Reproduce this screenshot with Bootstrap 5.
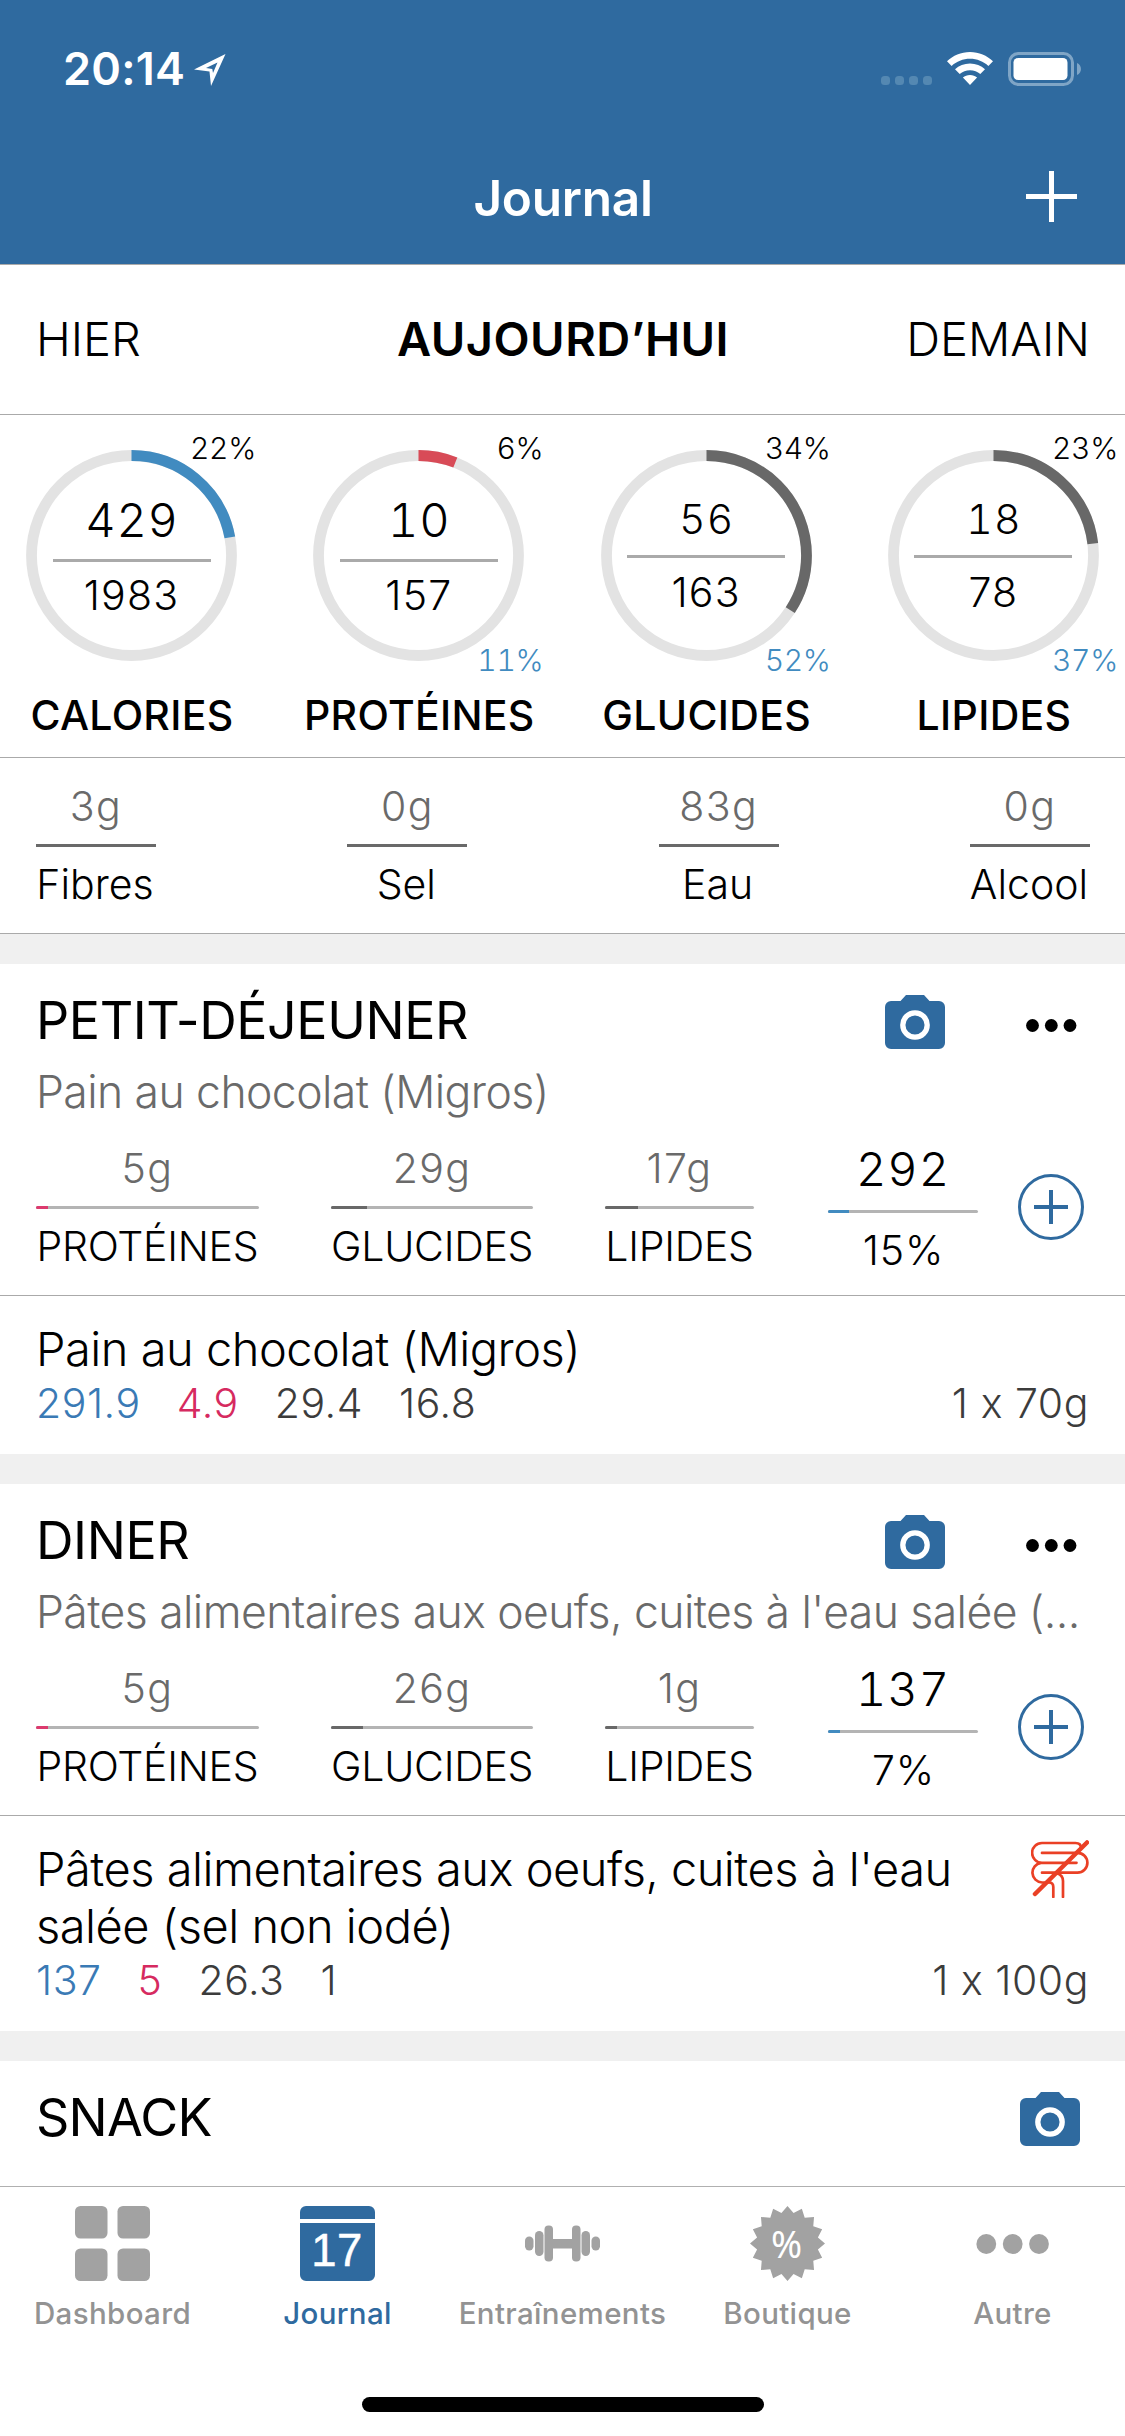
<!DOCTYPE html>
<html lang="fr">
<head>
<meta charset="utf-8">
<meta name="viewport" content="width=device-width, initial-scale=1">
<title>Journal</title>
<link rel="stylesheet" href="https://cdn.jsdelivr.net/npm/bootstrap@5.3.0/dist/css/bootstrap.min.css">
<style>
  :root { --brand: #2f6a9f; --rule: #aaaaaa; }
  body { font-family: Inter, "Liberation Sans", sans-serif; font-weight: 300; color: #000; background: #fff; line-height: 50px; font-size: 41px; }
  svg { display: block; flex: none; }
  .screen { width: 1125px; height: 2436px; overflow: hidden; white-space: nowrap; }
  .tnum { font-feature-settings: "tnum"; }

  .topbar { background: var(--brand); color: #fff; font-weight: 600; }
  .statusbar { height: 132px; padding: 5px 43px 0 63px; }
  .clock { font-size: 45px; letter-spacing: .25px; }
  .navrow { height: 132px; }
  .navrow .title { font-size: 49.5px; letter-spacing: -.25px; padding-left: 1px; }
  .navrow .add { right: 48px; top: 39px; }

  .days { height: 151px; border-top: 1px solid var(--rule); border-bottom: 1px solid var(--rule); padding: 0 35px 2px 36px; font-size: 47px; }
  .days .today { font-weight: 600; letter-spacing: .45px; padding-left: 1px; }

  .rings { height: 343px; border-bottom: 1px solid var(--rule); padding: 35px 26px 0; }
  .ring-col { width: 211px; }
  .ring { width: 211px; height: 211px; padding-top: 45px; }
  .ring.raised { padding-top: 44px; }
  .ring svg { left: 0; top: 0; }
  .ring .eaten { letter-spacing: 1.2px; margin-right: -1px; }
  .ring .eaten.big { font-size: 47px; letter-spacing: .8px; }
  .ring .bar { width: 158px; height: 3px; margin-top: 14px; background: #aaa; }
  .ring.raised .bar { margin-top: 11px; }
  .ring .goal { letter-spacing: 1.2px; margin-top: 8px; }
  .ring.raised .goal { margin-top: 9px; }
  .ring .pct { right: -19px; font-size: 30px; line-height: 36px; letter-spacing: -.3px; }
  .ring .pct.hi { top: -20px; }
  .ring .pct.lo { bottom: -17px; color: #418bc0; }
  .ring-name { margin-top: 29px; font-weight: 500; letter-spacing: .3px; padding-left: 1px; }

  .micros { height: 176px; border-bottom: 1px solid var(--rule); padding: 23px 35px 0 36px; }
  .micros > div { width: 120px; }
  .grams { color: #6a6a6a; letter-spacing: 1.4px; }
  .micros .line { width: 100%; height: 3px; background: #696969; margin: 13px 0 12px; }
  .micros .name { margin-left: -2px; }

  .band { height: 30px; background: #f0f0f0; }

  .meal-head { padding: 27px 0 0 36px; }
  .meal-title { font-size: 52px; font-weight: 400; line-height: 60px; letter-spacing: -.42px; }
  .cam { margin-top: 4px; }
  .more { margin: 28px 48px 0 81px; }
  .meal-sub { font-size: 44.5px; line-height: 60px; letter-spacing: -.57px; color: #6a6a6a; padding-left: 36px; margin-top: 11px; }
  .stats { height: 174px; padding: 21px 0 0 36px; border-bottom: 1px solid var(--rule); }
  .stats .gauge { height: 3px; background: #b4b4b4; border-radius: 2px; overflow: hidden; margin: 13px 0 12px; width: 100%; }
  .stats .gauge i { display: block; height: 3px; background: #686868; }
  .stats .name { letter-spacing: -.25px; }
  .w-p { width: 223px; margin-right: 72px; }
  .w-g { width: 202px; margin-right: 72px; }
  .w-l { width: 149px; margin-right: 74px; }
  .w-c { width: 150px; margin-right: 40px; padding-top: 1px; }
  .w-c .kcal { font-size: 47px; letter-spacing: .9px; }
  .w-c .gauge { margin: 16px 0 12px; }
  .w-c .share { letter-spacing: .8px; padding-left: 1px; }
  .stats .plus { margin-top: 31px; }

  .food { padding: 24px 36px 26px 36px; }
  .food-name { font-size: 47px; line-height: 57px; letter-spacing: -.49px; }
  .vals { gap: 36px; color: #3c3c3c; letter-spacing: .55px; margin-top: 1px; }
  .vals .kc { color: #3a7ab5; }
  .vals .pr { color: #d62a60; }
  .snack { height: 125px; }

  .tabs { height: 250px; border-top: 1px solid #b0b0b0; padding-top: 19px; color: #939393; font-weight: 500; font-size: 29.5px; line-height: 36px; }
  .tabs .lbl { margin-top: 14px; letter-spacing: .35px; }
  .tabs .on { color: var(--brand); }
  .homebar { width: 402px; height: 15px; border-radius: 8px; background: #000; margin: 66px auto 0; }
</style>
<script src="https://cdn.jsdelivr.net/npm/bootstrap@5.3.0/dist/js/bootstrap.bundle.min.js"></script>
</head>
<body>
<svg width="0" height="0" class="position-absolute" aria-hidden="true">
  <symbol id="cam" viewBox="0 0 60 54"><path fill="#2f6a9f" d="M21 0H39L44.500 6H54a6 6 0 0 1 6 6V48a6 6 0 0 1-6 6H6a6 6 0 0 1-6-6V12a6 6 0 0 1 6-6H15.500Z"/><circle cx="30" cy="30" r="12.200" fill="none" stroke="#fff" stroke-width="5.300"/></symbol>
  <symbol id="dots" viewBox="0 0 51 13"><circle cx="6.500" cy="6.500" r="6.400"/><circle cx="25.300" cy="6.500" r="6.400"/><circle cx="44" cy="6.500" r="6.400"/></symbol>
  <symbol id="plus" viewBox="0 0 66 66"><circle cx="33" cy="33" r="31.500" fill="none" stroke="#2f6a9f" stroke-width="3"/><path d="M16 33H50M33 16V50" stroke="#2f6a9f" stroke-width="4"/></symbol>
</svg>

<div class="screen d-flex flex-column">
  <header class="topbar">
    <div class="statusbar d-flex align-items-center">
      <span class="clock">20:14</span>
      <svg width="32" height="33" viewBox="0 0 32 33" style="margin-left:9px;margin-top:4px"><path fill="#fff" fill-rule="evenodd" d="M31.500 0L17 32L15.500 17.500L0 15.500ZM23.500 8.500L12 14L18.300 15L19 19Z"/></svg>
      <svg class="ms-auto" width="52" height="34" viewBox="0 0 52 34"><g fill="#5488b2"><rect x="0" y="24" width="9" height="9" rx="3.500"/><rect x="14" y="24" width="9" height="9" rx="3.500"/><rect x="28" y="24" width="9" height="9" rx="3.500"/><rect x="42" y="24" width="9" height="9" rx="3.500"/></g></svg>
      <svg width="46" height="34" viewBox="0 0 46 34" style="margin-left:14px"><path fill="#fff" d="M23 0C14 0 6 3.500 0 9.300L4.600 14C9.500 9.400 16 6.800 23 6.800S36.500 9.400 41.400 14L46 9.300C40 3.500 32 0 23 0ZM23 11.500C17.200 11.500 12 13.700 8 17.300L12.700 22C15.500 19.600 19 18.200 23 18.200S30.500 19.600 33.300 22L38 17.300C34 13.700 28.800 11.500 23 11.500ZM23 23C20.200 23 17.800 24 15.900 25.600L23 33L30.100 25.600C28.200 24 25.800 23 23 23Z"/></svg>
      <svg width="74" height="34" viewBox="0 0 74 34" style="margin-left:15px"><rect x="1.500" y="1.500" width="63" height="31" rx="9" fill="none" stroke="#7fa5c6" stroke-width="3"/><rect x="5.500" y="6" width="54" height="22" rx="4.500" fill="#fff"/><path fill="#7fa5c6" d="M69 11C74.300 13 74.300 21 69 23Z"/></svg>
    </div>
    <div class="navrow position-relative d-flex align-items-center justify-content-center">
      <span class="title">Journal</span>
      <svg class="add position-absolute" width="51" height="51" viewBox="0 0 51 51"><path d="M0 25.500H51M25.500 0V51" stroke="#fff" stroke-width="5"/></svg>
    </div>
  </header>

  <nav class="days position-relative d-flex align-items-center justify-content-between">
    <span>HIER</span>
    <span class="today position-absolute start-50 translate-middle-x">AUJOURD’HUI</span>
    <span>DEMAIN</span>
  </nav>

  <section class="rings d-flex justify-content-between">
    <div class="ring-col d-flex flex-column align-items-center">
      <div class="ring position-relative d-flex flex-column align-items-center">
        <svg class="position-absolute" width="211" height="211" viewBox="0 0 211 211" fill="none" stroke-width="10.800"><circle cx="105.500" cy="105.500" r="100" stroke="#e3e3e3"/><circle cx="105.500" cy="105.500" r="100" stroke="#418bc0" pathLength="100" stroke-dasharray="22.100 100" transform="rotate(-90 105.500 105.500)"/></svg>
        <span class="eaten big tnum">429</span><div class="bar"></div><span class="goal">1983</span>
        <span class="pct hi tnum position-absolute">22%</span>
      </div>
      <div class="ring-name">CALORIES</div>
    </div>
    <div class="ring-col d-flex flex-column align-items-center">
      <div class="ring position-relative d-flex flex-column align-items-center">
        <svg class="position-absolute" width="211" height="211" viewBox="0 0 211 211" fill="none" stroke-width="10.800"><circle cx="105.500" cy="105.500" r="100" stroke="#e3e3e3"/><circle cx="105.500" cy="105.500" r="100" stroke="#d84b57" pathLength="100" stroke-dasharray="6 100" transform="rotate(-90 105.500 105.500)"/></svg>
        <span class="eaten big tnum">10</span><div class="bar"></div><span class="goal">157</span>
        <span class="pct hi tnum position-absolute">6%</span><span class="pct lo tnum position-absolute">11%</span>
      </div>
      <div class="ring-name">PROTÉINES</div>
    </div>
    <div class="ring-col d-flex flex-column align-items-center">
      <div class="ring raised position-relative d-flex flex-column align-items-center">
        <svg class="position-absolute" width="211" height="211" viewBox="0 0 211 211" fill="none" stroke-width="10.800"><circle cx="105.500" cy="105.500" r="100" stroke="#e3e3e3"/><circle cx="105.500" cy="105.500" r="100" stroke="#686868" pathLength="100" stroke-dasharray="34.200 100" transform="rotate(-90 105.500 105.500)"/></svg>
        <span class="eaten tnum">56</span><div class="bar"></div><span class="goal">163</span>
        <span class="pct hi tnum position-absolute">34%</span><span class="pct lo tnum position-absolute">52%</span>
      </div>
      <div class="ring-name">GLUCIDES</div>
    </div>
    <div class="ring-col d-flex flex-column align-items-center">
      <div class="ring raised position-relative d-flex flex-column align-items-center">
        <svg class="position-absolute" width="211" height="211" viewBox="0 0 211 211" fill="none" stroke-width="10.800"><circle cx="105.500" cy="105.500" r="100" stroke="#e3e3e3"/><circle cx="105.500" cy="105.500" r="100" stroke="#686868" pathLength="100" stroke-dasharray="23.100 100" transform="rotate(-90 105.500 105.500)"/></svg>
        <span class="eaten tnum">18</span><div class="bar"></div><span class="goal">78</span>
        <span class="pct hi tnum position-absolute">23%</span><span class="pct lo tnum position-absolute">37%</span>
      </div>
      <div class="ring-name">LIPIDES</div>
    </div>
  </section>

  <section class="micros d-flex justify-content-between text-center">
    <div><div class="grams">3g</div><div class="line"></div><div class="name">Fibres</div></div>
    <div><div class="grams">0g</div><div class="line"></div><div class="name">Sel</div></div>
    <div><div class="grams">83g</div><div class="line"></div><div class="name">Eau</div></div>
    <div><div class="grams">0g</div><div class="line"></div><div class="name">Alcool</div></div>
  </section>

  <div class="band"></div>

  <section>
    <div class="meal-head d-flex">
      <div class="meal-title me-auto">PETIT-DÉJEUNER</div>
      <svg class="cam" width="60" height="54"><use href="#cam"/></svg>
      <svg class="more" width="51" height="13"><use href="#dots"/></svg>
    </div>
    <div class="meal-sub">Pain au chocolat (Migros)</div>
    <div class="stats d-flex text-center">
      <div class="w-p"><div class="grams">5g</div><div class="gauge"><i style="width:12px;background:#dc3a6e"></i></div><div class="name">PROTÉINES</div></div>
      <div class="w-g"><div class="grams">29g</div><div class="gauge"><i style="width:18%"></i></div><div class="name">GLUCIDES</div></div>
      <div class="w-l"><div class="grams">17g</div><div class="gauge"><i style="width:22%"></i></div><div class="name">LIPIDES</div></div>
      <div class="w-c"><div class="kcal tnum">292</div><div class="gauge"><i style="width:14%;background:#418bc0"></i></div><div class="share">15%</div></div>
      <svg class="plus" width="66" height="66"><use href="#plus"/></svg>
    </div>
    <div class="food">
      <div class="food-name">Pain au chocolat (Migros)</div>
      <div class="vals d-flex"><span class="kc">291.9</span><span class="pr">4.9</span><span>29.4</span><span>16.8</span><span class="ms-auto">1 x 70g</span></div>
    </div>
  </section>

  <div class="band"></div>

  <section>
    <div class="meal-head d-flex">
      <div class="meal-title me-auto">DINER</div>
      <svg class="cam" width="60" height="54"><use href="#cam"/></svg>
      <svg class="more" width="51" height="13"><use href="#dots"/></svg>
    </div>
    <div class="meal-sub">Pâtes alimentaires aux oeufs, cuites à l'eau salée (...</div>
    <div class="stats d-flex text-center">
      <div class="w-p"><div class="grams">5g</div><div class="gauge"><i style="width:12px;background:#dc3a6e"></i></div><div class="name">PROTÉINES</div></div>
      <div class="w-g"><div class="grams">26g</div><div class="gauge"><i style="width:16%"></i></div><div class="name">GLUCIDES</div></div>
      <div class="w-l"><div class="grams">1g</div><div class="gauge"><i style="width:12px"></i></div><div class="name">LIPIDES</div></div>
      <div class="w-c"><div class="kcal tnum">137</div><div class="gauge"><i style="width:12px;background:#418bc0"></i></div><div class="share">7%</div></div>
      <svg class="plus" width="66" height="66"><use href="#plus"/></svg>
    </div>
    <div class="food">
      <div class="d-flex justify-content-between align-items-start">
        <div class="food-name">Pâtes alimentaires aux oeufs, cuites à l'eau<br>salée (sel non iodé)</div>
        <svg width="58" height="58" viewBox="0 0 58 58" fill="none" stroke="#ea4025" stroke-width="2.700" stroke-linecap="round" stroke-linejoin="round"><path d="M50 8C50 4.500 48 3 44.500 3H11a9.900 9.900 0 0 0 0 19.800H45.500M11 12.900H46.500a9.900 9.900 0 0 1 0 19.800H11M10 22.800a9.900 9.900 0 0 0 1 19.700H18C21 42.500 22.300 44 22.300 47V57M26 33.500C30 34.500 32 37 32 41V57"/><path d="M4 54L56 2.500" stroke-width="4.500"/></svg>
      </div>
      <div class="vals d-flex"><span class="kc">137</span><span class="pr">5</span><span>26.3</span><span>1</span><span class="ms-auto">1 x 100g</span></div>
    </div>
  </section>

  <div class="band"></div>

  <section class="snack">
    <div class="meal-head d-flex" style="padding-right:45px">
      <div class="meal-title me-auto" style="letter-spacing:-.8px">SNACK</div>
      <svg class="cam" width="60" height="54"><use href="#cam"/></svg>
    </div>
  </section>

  <footer class="tabs">
    <div class="row g-0 text-center">
      <div class="col d-flex flex-column align-items-center">
        <svg width="75" height="75" viewBox="0 0 75 75" fill="#a2a2a2"><rect width="32.500" height="32.500" rx="5.500"/><rect x="42.500" width="32.500" height="32.500" rx="5.500"/><rect y="42.500" width="32.500" height="32.500" rx="5.500"/><rect x="42.500" y="42.500" width="32.500" height="32.500" rx="5.500"/></svg>
        <div class="lbl">Dashboard</div>
      </div>
      <div class="col d-flex flex-column align-items-center on">
        <svg width="75" height="75" viewBox="0 0 75 75"><path fill="#2f6a9f" d="M6 0H69a6 6 0 0 1 6 6V13H0V6a6 6 0 0 1 6-6ZM0 17H75V69a6 6 0 0 1-6 6H6a6 6 0 0 1-6-6Z"/><text x="37" y="60" text-anchor="middle" font-family="Liberation Sans" font-weight="400" font-size="45.500" letter-spacing=".5" fill="#fff" stroke="#fff" stroke-width=".5">17</text></svg>
        <div class="lbl">Journal</div>
      </div>
      <div class="col d-flex flex-column align-items-center">
        <svg width="75" height="75" viewBox="0 0 75 75" fill="#a2a2a2"><rect y="30.500" width="8.500" height="14" rx="4.200"/><rect x="10" y="25" width="8.500" height="25" rx="4.200"/><rect x="19.500" y="19.500" width="8.500" height="36" rx="4"/><rect x="27" y="33" width="21" height="9.500"/><rect x="47" y="19.500" width="8.500" height="36" rx="4"/><rect x="56.500" y="25" width="8.500" height="25" rx="4.200"/><rect x="66.500" y="30.500" width="8.500" height="14" rx="4.200"/></svg>
        <div class="lbl">Entraînements</div>
      </div>
      <div class="col d-flex flex-column align-items-center">
        <svg width="75" height="75" viewBox="0 0 75 75"><polygon id="seal" fill="#a2a2a2"/><text x="36.500" y="51.500" text-anchor="middle" font-family="Noto Sans" font-weight="400" font-size="37.500" fill="#fff">%</text></svg>
        <div class="lbl">Boutique</div>
      </div>
      <div class="col d-flex flex-column align-items-center">
        <svg width="75" height="75" viewBox="0 0 75 75" fill="#a2a2a2"><circle cx="11.300" cy="38" r="9.900"/><circle cx="37.700" cy="38" r="9.900"/><circle cx="64" cy="38" r="9.900"/></svg>
        <div class="lbl">Autre</div>
      </div>
    </div>
    <div class="homebar"></div>
  </footer>
</div>
<script>
  // Sixteen-pointed seal behind the percent sign
  const pts = [];
  for (let i = 0; i < 32; i++) {
    const r = i % 2 ? 31 : 37.5, a = i * Math.PI / 16;
    pts.push((37.5 + r * Math.sin(a)).toFixed(2) + ',' + (37.5 - r * Math.cos(a)).toFixed(2));
  }
  document.getElementById('seal').setAttribute('points', pts.join(' '));
</script>
</body>
</html>
